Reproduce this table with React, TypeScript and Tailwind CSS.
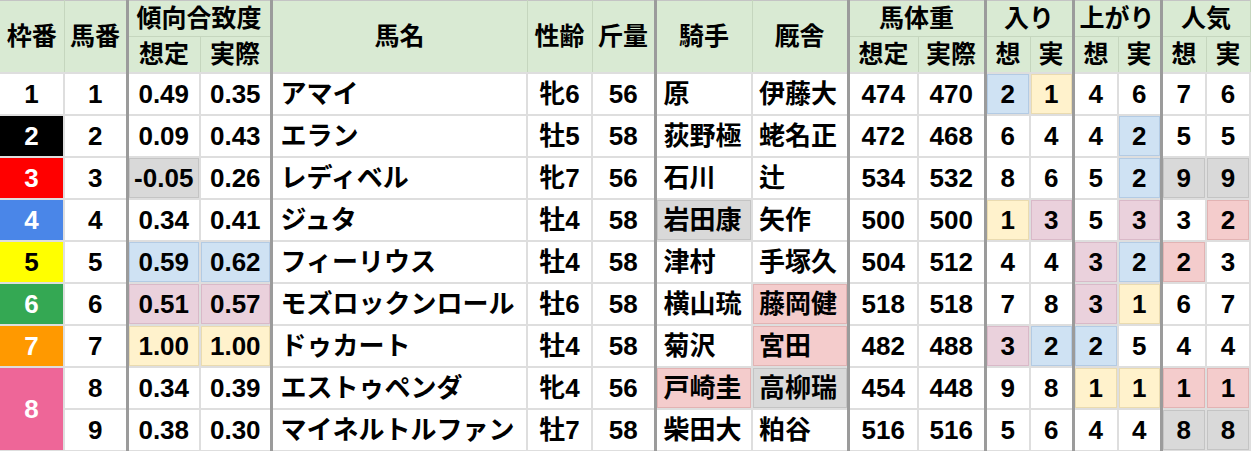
import React from 'react';

type Cell = string;

// value|hl  hl: b=blue y=yellow p=purple r=red g=gray
const HL: Record<string, string> = {
  b: 'bg-[#cfe2f3] shadow-[inset_0_0_0_1px_#b3cbe4]',
  y: 'bg-[#fff2cc] shadow-[inset_0_0_0_1px_#eadbb0]',
  p: 'bg-[#ead1dc] shadow-[inset_0_0_0_1px_#d9b9c8]',
  r: 'bg-[#f4cccc] shadow-[inset_0_0_0_1px_#e2b3b3]',
  g: 'bg-[#d9d9d9] shadow-[inset_0_0_0_1px_#c4c4c4]',
};

const FRAMES: Record<number, string> = {
  1: 'bg-white text-black',
  2: 'bg-black text-white',
  3: 'bg-[#ff0000] text-white',
  4: 'bg-[#4a86e8] text-white',
  5: 'bg-[#ffff00] text-black',
  6: 'bg-[#34a853] text-white',
  7: 'bg-[#ff9900] text-white',
  8: 'bg-[#ee6698] text-white',
};

const rows: { frame?: number; span?: number; cells: Cell[] }[] = [
  { frame: 1, cells: ['1', '0.49', '0.35', 'アマイ', '牝6', '56', '原', '伊藤大', '474', '470', '2|b', '1|y', '4', '6', '7', '6'] },
  { frame: 2, cells: ['2', '0.09', '0.43', 'エラン', '牡5', '58', '荻野極', '蛯名正', '472', '468', '6', '4', '4', '2|b', '5', '5'] },
  { frame: 3, cells: ['3', '-0.05|g', '0.26', 'レディベル', '牝7', '56', '石川', '辻', '534', '532', '8', '6', '5', '2|b', '9|g', '9|g'] },
  { frame: 4, cells: ['4', '0.34', '0.41', 'ジュタ', '牡4', '58', '岩田康|g', '矢作', '500', '500', '1|y', '3|p', '5', '3|p', '3', '2|r'] },
  { frame: 5, cells: ['5', '0.59|b', '0.62|b', 'フィーリウス', '牡4', '58', '津村', '手塚久', '504', '512', '4', '4', '3|p', '2|b', '2|r', '3'] },
  { frame: 6, cells: ['6', '0.51|p', '0.57|p', 'モズロックンロール', '牡6', '58', '横山琉', '藤岡健|r', '518', '518', '7', '8', '3|p', '1|y', '6', '7'] },
  { frame: 7, cells: ['7', '1.00|y', '1.00|y', 'ドゥカート', '牡4', '58', '菊沢', '宮田|r', '482', '488', '3|p', '2|b', '2|b', '5', '4', '4'] },
  { frame: 8, span: 2, cells: ['8', '0.34', '0.39', 'エストゥペンダ', '牝4', '56', '戸崎圭|r', '高柳瑞|g', '454', '448', '9', '8', '1|y', '1|y', '1|r', '1|r'] },
  { cells: ['9', '0.38', '0.30', 'マイネルトルファン', '牡7', '58', '柴田大', '粕谷', '516', '516', '5', '6', '4', '4', '8|g', '8|g'] },
];

const widths = [64, 63, 73, 71, 256, 65, 63, 97, 96, 70, 67, 45, 43, 45, 43, 45, 44];
// cells with a thick right border (index in cells array)
const THICK = new Set([0, 2, 5, 7, 9, 11, 13]);
const ALIGN: Record<number, string> = {
  3: 'text-left pl-[8px]',
  6: 'text-left pl-[7px]',
  7: 'text-left pl-[6px]',
};

const thick = 'border-r-[3px] border-r-[#9b9b9b]';
const hd = 'bg-[#d9ead3] border border-[#c5d6be] font-bold text-black text-center text-[25px]';
const top = 'border-t-[#c4c4c4]';

export default function App() {
  return (
    <div className="w-[1251px] h-[451px] bg-white overflow-hidden" style={{ fontFamily: '"Liberation Sans", "Noto Sans CJK JP", sans-serif' }}>
      <table className="table-fixed border-collapse w-[1250px] text-[26px] leading-none">
        <colgroup>
          {widths.map((w, i) => (
            <col key={i} style={{ width: w }} />
          ))}
        </colgroup>
        <thead>
          <tr className="h-[36px]">
            <th rowSpan={2} className={`${hd} ${top} border-l-0`}>枠番</th>
            <th rowSpan={2} className={`${hd} ${top} ${thick}`}>馬番</th>
            <th colSpan={2} className={`${hd} ${top} ${thick}`}>傾向合致度</th>
            <th rowSpan={2} className={`${hd} ${top}`}>馬名</th>
            <th rowSpan={2} className={`${hd} ${top}`}>性齢</th>
            <th rowSpan={2} className={`${hd} ${top} ${thick}`}>斤量</th>
            <th rowSpan={2} className={`${hd} ${top}`}>騎手</th>
            <th rowSpan={2} className={`${hd} ${top} ${thick}`}>厩舎</th>
            <th colSpan={2} className={`${hd} ${top} ${thick}`}>馬体重</th>
            <th colSpan={2} className={`${hd} ${top} ${thick}`}>入り</th>
            <th colSpan={2} className={`${hd} ${top} ${thick}`}>上がり</th>
            <th colSpan={2} className={`${hd} ${top}`}>人気</th>
          </tr>
          <tr className="h-[36px]">
            <th className={hd}>想定</th>
            <th className={`${hd} ${thick}`}>実際</th>
            <th className={hd}>想定</th>
            <th className={`${hd} ${thick}`}>実際</th>
            <th className={hd}>想</th>
            <th className={`${hd} ${thick}`}>実</th>
            <th className={hd}>想</th>
            <th className={`${hd} ${thick}`}>実</th>
            <th className={hd}>想</th>
            <th className={hd}>実</th>
          </tr>
        </thead>
        <tbody>
          {rows.map((r, ri) => (
            <tr key={ri} className="h-[42px]">
              {r.frame !== undefined && (
                <td
                  rowSpan={r.span ?? 1}
                  className={`${FRAMES[r.frame]} border-2 border-[#dedede] border-l-0 text-center font-bold`}
                >
                  {r.frame}
                </td>
              )}
              {r.cells.map((c, ci) => {
                const [v, h] = c.split('|');
                return (
                  <td
                    key={ci}
                    className={`border-2 border-[#dedede] font-bold text-black whitespace-nowrap ${ALIGN[ci] ?? 'text-center'} ${h ? HL[h] : 'bg-white'} ${THICK.has(ci) ? thick : ''}`}
                  >
                    {v}
                  </td>
                );
              })}
            </tr>
          ))}
        </tbody>
      </table>
    </div>
  );
}
